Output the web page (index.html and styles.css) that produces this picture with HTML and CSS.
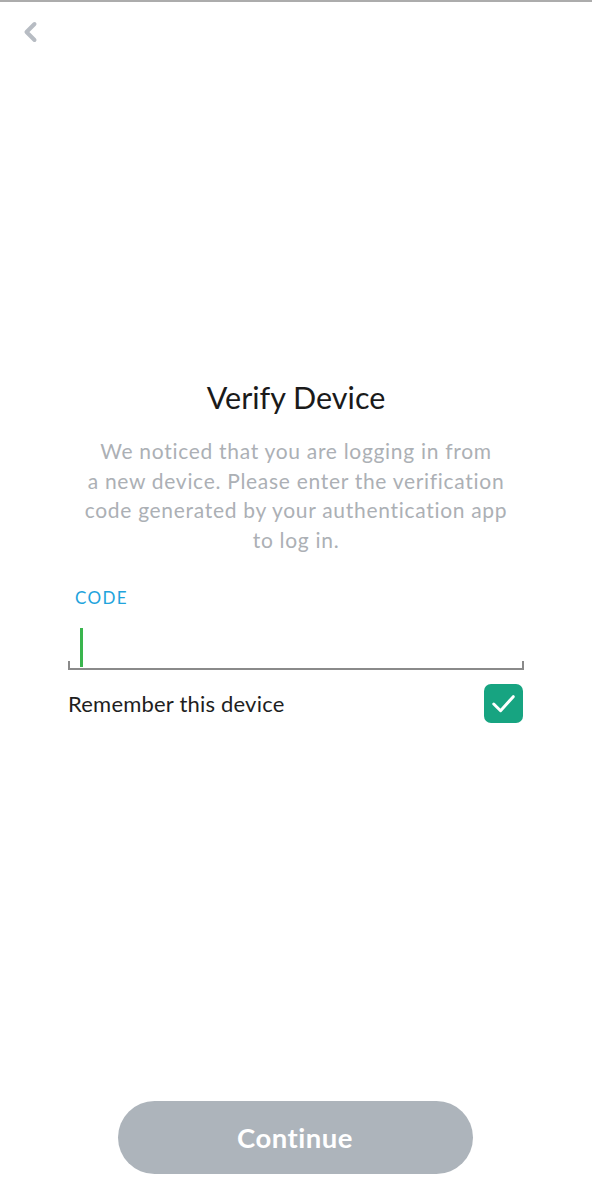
FILE: index.html
```html
<!DOCTYPE html>
<html>
<head>
<meta charset="utf-8">
<link rel="stylesheet" href="styles.css">
</head>
<body>
<div class="screen">
  <div class="topbar">
    <svg class="back" width="16" height="22" viewBox="0 0 16 22">
      <path d="M12.5 3 L4.5 11 L12.5 19" fill="none" stroke="#b7bcc3" stroke-width="4" stroke-linecap="round" stroke-linejoin="round"/>
    </svg>
  </div>
  <div class="content">
    <h1 class="title">Verify Device</h1>
    <p class="desc">We noticed that you are logging in from<br>a new device. Please enter the verification<br>code generated by your authentication app<br>to log in.</p>
    <div class="field">
      <div class="label">CODE</div>
      <div class="input"><span class="cursor"></span></div>
    </div>
    <div class="remember">
      <span class="remember-text">Remember this device</span>
      <span class="check">
        <svg width="40" height="40" viewBox="0 0 40 40">
          <path d="M10 20.5 L17 27.5 L30 13" fill="none" stroke="#fff" stroke-width="3" stroke-linecap="round" stroke-linejoin="round"/>
        </svg>
      </span>
    </div>
  </div>
  <div class="footer">
    <button class="continue">Continue</button>
  </div>
</div>
</body>
</html>
```

FILE: styles.css
```css
* { box-sizing: border-box; }
html, body { margin: 0; padding: 0; background: #fff; }
body { font-family: "Lato", "Open Sans", sans-serif; }
.screen {
  width: 592px;
  height: 1200px;
  border-top: 2px solid #acacac;
  display: flex;
  flex-direction: column;
}
.topbar { height: 44px; padding: 19px 0 0 22px; }
.back { display: block; }
.content {
  padding: 332px 68px 0 68px;
  display: flex;
  flex-direction: column;
}
.title {
  margin: 0;
  text-align: center;
  font-size: 30.5px;
  font-weight: 400;
  color: #1a1a1a;
  line-height: 38px;
}
.desc {
  margin: 20px -20px 0 -20px;
  text-align: center;
  font-size: 21px;
  line-height: 29.5px;
  color: #acb0b5;
  letter-spacing: 0.7px;
}
.field { margin-top: 33px; padding: 0; }
.label {
  padding-left: 7px;
  font-size: 17px;
  color: #21a3dc;
  line-height: 22px;
  letter-spacing: 1.4px;
}
.input {
  margin-top: 13px;
  height: 48px;
  position: relative;
  border-bottom: 2px solid #8a8a8a;
  background:
    linear-gradient(#8a8a8a, #8a8a8a) left bottom / 2px 7px no-repeat,
    linear-gradient(#8a8a8a, #8a8a8a) right bottom / 2px 7px no-repeat;
}
.cursor {
  display: block;
  position: absolute;
  left: 12px;
  top: 6px;
  width: 3px;
  height: 39px;
  background: #3ab54e;
}
.remember {
  margin-top: 14px;
  display: flex;
  align-items: center;
  justify-content: space-between;
  padding-right: 1px;
}
.remember-text {
  font-size: 22px;
  color: #1e1e1e;
  letter-spacing: 0.2px;
}
.check {
  width: 39px;
  height: 39px;
  border-radius: 7px;
  background: #17a481;
  display: block;
}
.check svg { display: block; width: 39px; height: 39px; }
.footer {
  margin-top: auto;
  padding-bottom: 26px;
  display: flex;
  justify-content: center;
}
.continue {
  width: 355px;
  height: 73px;
  margin-left: -2px;
  border: none;
  border-radius: 37px;
  background: #adb4bb;
  color: #fff;
  font-family: "Lato", sans-serif;
  font-size: 27.5px;
  font-weight: 700;
  letter-spacing: 0.5px;
}
```
